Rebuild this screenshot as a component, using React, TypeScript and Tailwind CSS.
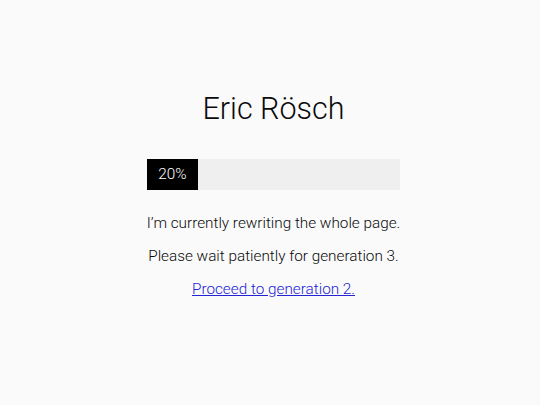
export default function App() {
  const progress = 20;
  return (
    <div
      className="min-h-[405px] w-full bg-[#fafafa] text-[#0a0a0a] font-light flex flex-col items-center pt-[89px] pl-[7px]"
      style={{ fontFamily: "Roboto, 'Liberation Sans', sans-serif" }}
    >
      <h1 className="text-[30.5px] leading-[40px] font-light">Eric Rösch</h1>
      <div className="mt-[30px] w-[253px] h-[31px] bg-[#efefef] flex">
        <div
          className="h-full bg-black text-white text-[15.3px] flex items-center justify-center"
          style={{ width: `${progress}%` }}
        >
          {progress}%
        </div>
      </div>
      <div className="mt-[21px] flex flex-col items-center text-[15.3px] leading-[24px] gap-[9px]">
        <p>I’m currently rewriting the whole page.</p>
        <p>Please wait patiently for generation 3.</p>
        <a href="#" className="text-[#2424d4] underline">
          Proceed to generation 2.
        </a>
      </div>
    </div>
  );
}
